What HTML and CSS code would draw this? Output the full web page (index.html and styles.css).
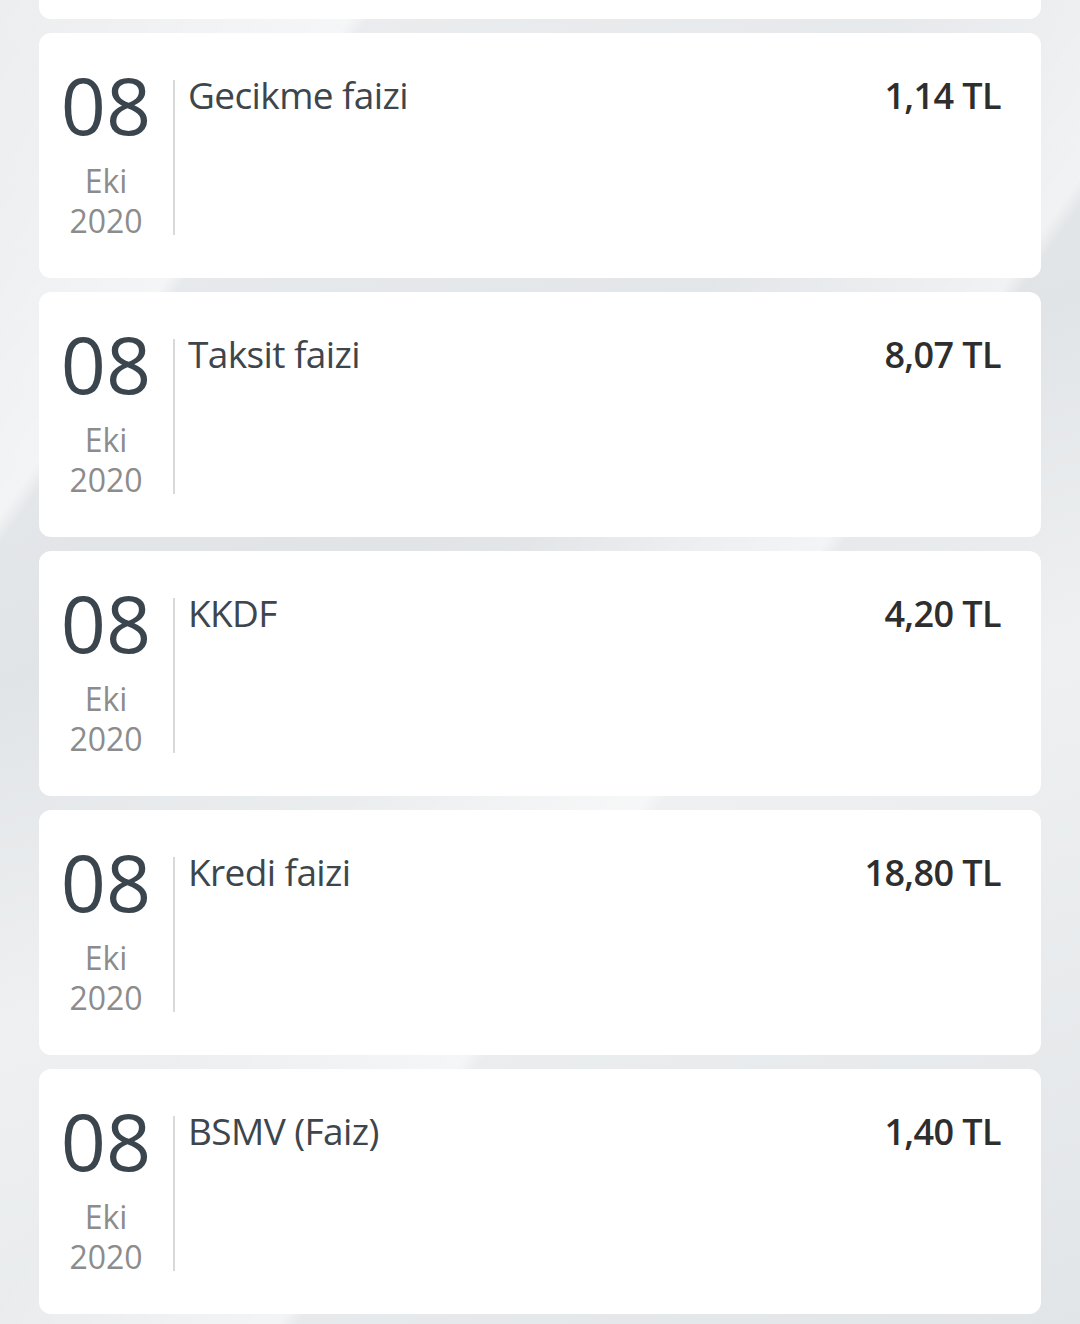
FILE: index.html
```html
<!DOCTYPE html>
<html lang="tr">
<head>
<meta charset="utf-8">
<link rel="stylesheet" href="styles.css">
</head>
<body>
<main class="list">
  <section class="card"></section>
  <section class="card">
    <div class="date"><span class="day">08</span><span class="month">Eki</span><span class="year">2020</span></div>
    <div class="divider"></div>
    <div class="name">Gecikme faizi</div>
    <div class="amount">1,14 TL</div>
  </section>
  <section class="card">
    <div class="date"><span class="day">08</span><span class="month">Eki</span><span class="year">2020</span></div>
    <div class="divider"></div>
    <div class="name">Taksit faizi</div>
    <div class="amount">8,07 TL</div>
  </section>
  <section class="card">
    <div class="date"><span class="day">08</span><span class="month">Eki</span><span class="year">2020</span></div>
    <div class="divider"></div>
    <div class="name">KKDF</div>
    <div class="amount">4,20 TL</div>
  </section>
  <section class="card">
    <div class="date"><span class="day">08</span><span class="month">Eki</span><span class="year">2020</span></div>
    <div class="divider"></div>
    <div class="name">Kredi faizi</div>
    <div class="amount">18,80 TL</div>
  </section>
  <section class="card">
    <div class="date"><span class="day">08</span><span class="month">Eki</span><span class="year">2020</span></div>
    <div class="divider"></div>
    <div class="name">BSMV (Faiz)</div>
    <div class="amount">1,40 TL</div>
  </section>
</main>
</body>
</html>
```
FILE: styles.css
```css
html, body {
  margin: 0;
  padding: 0;
}
body {
  width: 1080px;
  height: 1324px;
  overflow: hidden;
  font-family: "Open Sans", "DejaVu Sans", sans-serif;
  background:
    linear-gradient(125deg, rgba(255,255,255,0) 0%, rgba(255,255,255,0.55) 18%, rgba(255,255,255,0) 19%, rgba(255,255,255,0) 45%, rgba(255,255,255,0.5) 60%, rgba(255,255,255,0) 61%),
    linear-gradient(160deg, #eceef0 0%, #e1e4e7 40%, #eef0f1 60%, #e2e5e8 100%);
}
.list {
  display: flex;
  flex-direction: column;
  gap: 14px;
  padding: 0 39px;
  margin-top: -226px;
}
.card {
  box-sizing: border-box;
  height: 245px;
  background: #ffffff;
  border-radius: 12px;
  display: flex;
  align-items: flex-start;
  padding: 33px 40px 0 0;
}
.date {
  width: 134px;
  display: flex;
  flex-direction: column;
  align-items: center;
  flex: none;
}
.day {
  font-size: 79px;
  line-height: 78px;
  color: #3b454d;
  letter-spacing: 0;
}
.month, .year {
  font-size: 32px;
  line-height: 40px;
  color: #8c8c8c;
}
.month {
  margin-top: 17px;
}
.divider {
  flex: none;
  width: 2px;
  height: 155px;
  margin-top: 14px;
  background: #d9d9d9;
}
.name {
  flex: 1;
  padding-left: 13px;
  margin-top: 5px;
  font-size: 37px;
  line-height: 48px;
  letter-spacing: -0.6px;
  color: #3d464c;
}
.amount {
  margin-top: 6px;
  font-size: 36px;
  line-height: 48px;
  font-weight: 600;
  letter-spacing: -0.6px;
  color: #2e2e2e;
}
```
